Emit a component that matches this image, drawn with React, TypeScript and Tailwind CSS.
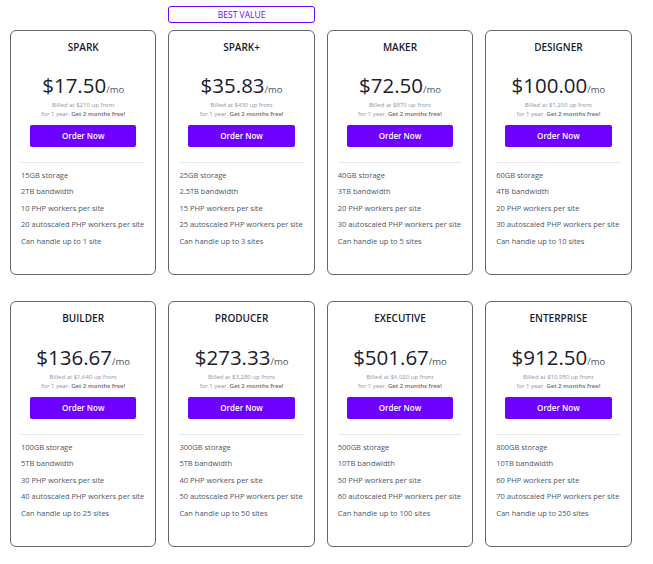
const plans = [
  { name: "SPARK", price: "$17.50", billed: "$210", features: ["15GB storage", "2TB bandwidth", "10 PHP workers per site", "20 autoscaled PHP workers per site", "Can handle up to 1 site"] },
  { name: "SPARK+", price: "$35.83", billed: "$430", best: true, features: ["25GB storage", "2.5TB bandwidth", "15 PHP workers per site", "25 autoscaled PHP workers per site", "Can handle up to 3 sites"] },
  { name: "MAKER", price: "$72.50", billed: "$870", features: ["40GB storage", "3TB bandwidth", "20 PHP workers per site", "30 autoscaled PHP workers per site", "Can handle up to 5 sites"] },
  { name: "DESIGNER", price: "$100.00", billed: "$1,200", features: ["60GB storage", "4TB bandwidth", "20 PHP workers per site", "30 autoscaled PHP workers per site", "Can handle up to 10 sites"] },
  { name: "BUILDER", price: "$136.67", billed: "$1,640", features: ["100GB storage", "5TB bandwidth", "30 PHP workers per site", "40 autoscaled PHP workers per site", "Can handle up to 25 sites"] },
  { name: "PRODUCER", price: "$273.33", billed: "$3,280", features: ["300GB storage", "5TB bandwidth", "40 PHP workers per site", "50 autoscaled PHP workers per site", "Can handle up to 50 sites"] },
  { name: "EXECUTIVE", price: "$501.67", billed: "$6,020", features: ["500GB storage", "10TB bandwidth", "50 PHP workers per site", "60 autoscaled PHP workers per site", "Can handle up to 100 sites"] },
  { name: "ENTERPRISE", price: "$912.50", billed: "$10,950", features: ["800GB storage", "10TB bandwidth", "60 PHP workers per site", "70 autoscaled PHP workers per site", "Can handle up to 250 sites"] },
];

type Plan = (typeof plans)[number] & { best?: boolean };

function Card({ plan }: { plan: Plan }) {
  return (
    <div className="relative h-[245.7px] rounded-[6px] border border-[#666666] bg-white px-[10px] text-center">
      {plan.best && (
        <div className="absolute left-[-1px] right-[-1px] top-[-25px] h-[17px] rounded-[3px] border border-[#6e00ff] text-[8.5px] leading-[15px] text-[#6e00ff]">
          BEST VALUE
        </div>
      )}
      <div className="mt-[8px] text-[10px] font-semibold leading-[16px] text-[#1a202c]">{plan.name}</div>
      <div className="mt-[15.4px] flex items-baseline justify-center text-[#1a202c]">
        <span className="text-[20.5px] font-medium leading-[30px]">{plan.price}</span>
        <span className="text-[9.5px] text-[#4a5568]">/mo</span>
      </div>
      <div className="mt-[1px] text-[6px] leading-[9px] text-[#8a94a3]">Billed at {plan.billed} up front</div>
      <div className="text-[6px] leading-[9px] text-[#8a94a3]">
        for 1 year. <span className="font-semibold text-[#5f6b7c]">Get 2 months free!</span>
      </div>
      <div className="mx-[9px] mt-[6px] h-[22px] rounded-[2px] bg-[#6e00ff] text-[8px] font-semibold leading-[22px] text-white">Order Now</div>
      <div className="mt-[15px] border-t border-[#e8e8e8] pt-[4px] text-left">
        {plan.features.map((f) => (
          <div key={f} className="h-[16.5px] text-[7.5px] leading-[16.5px] whitespace-nowrap text-[#4a5568]">{f}</div>
        ))}
      </div>
    </div>
  );
}

export default function App() {
  return (
    <div className="min-h-[564px] w-[653px] bg-white pl-[10px] pt-[29.6px] font-['Open_Sans',sans-serif]">
      <div className="grid w-[621.6px] grid-cols-4 gap-x-[12px] gap-y-[26.1px]">
        {plans.map((p) => (
          <Card key={p.name} plan={p} />
        ))}
      </div>
    </div>
  );
}
